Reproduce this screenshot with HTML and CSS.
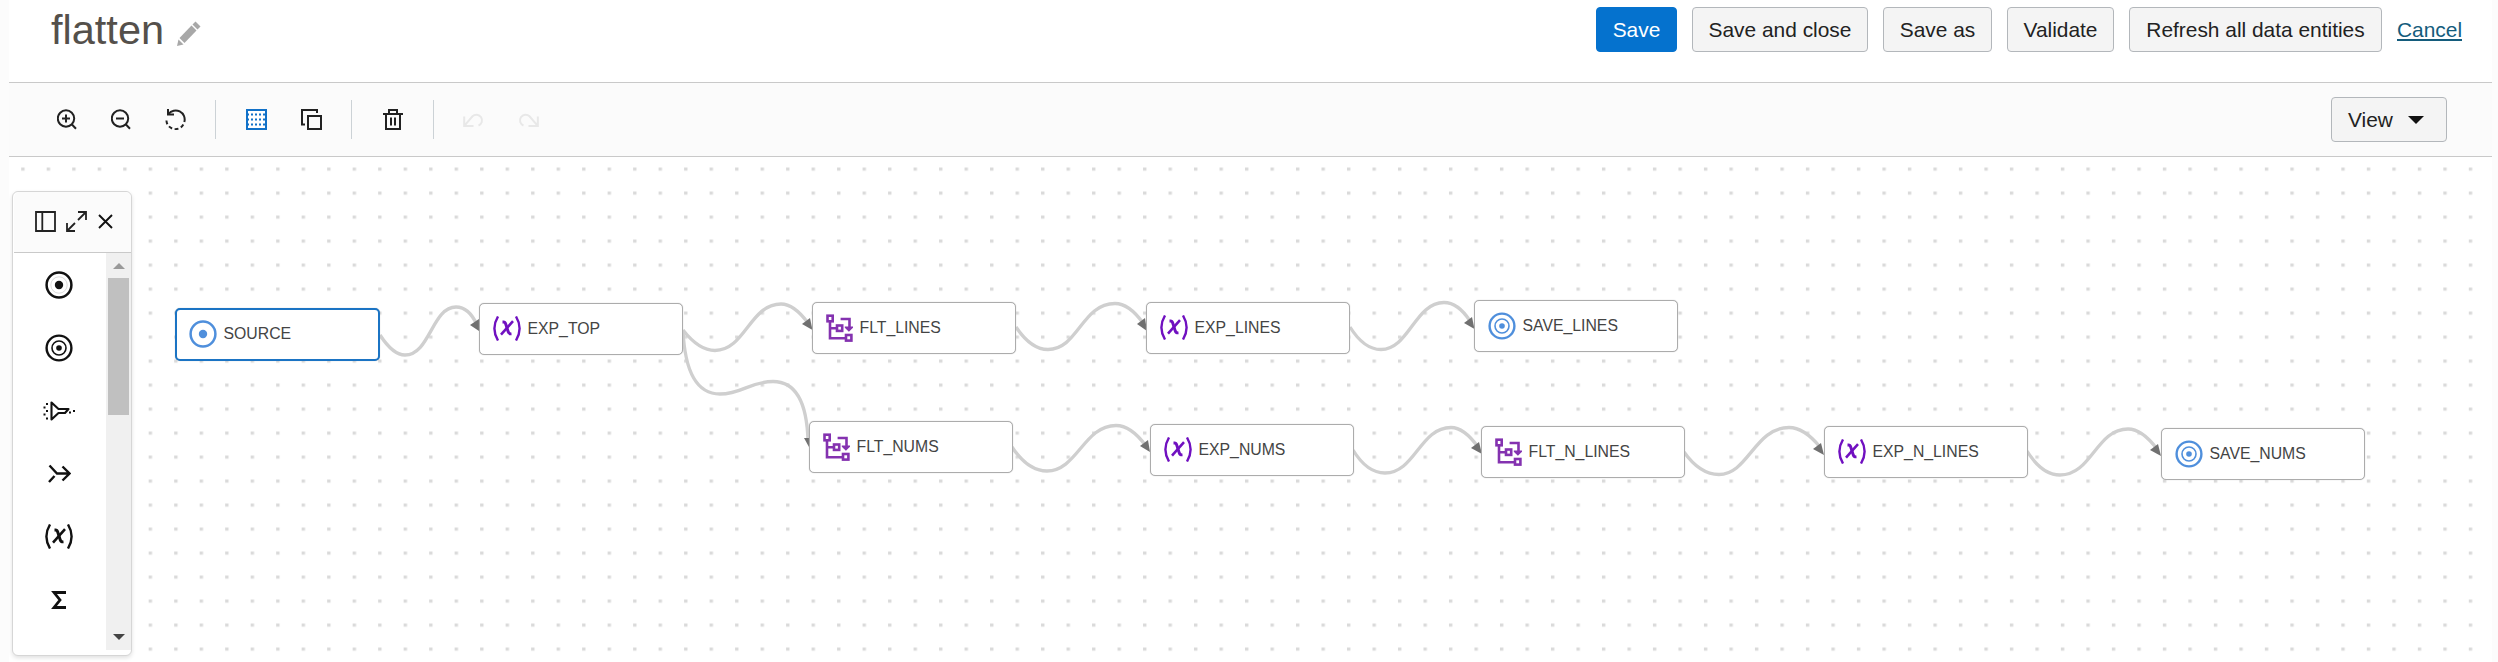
FILE: index.html
```html
<!DOCTYPE html>
<html lang="en">
<head>
<meta charset="utf-8">
<title>flatten</title>
<link rel="stylesheet" href="styles.css">
</head>
<body>
<svg class="defs" aria-hidden="true">
  <symbol id="source" viewBox="0 0 28 28"><circle cx="14" cy="14" r="12.4" fill="none" stroke="currentColor" stroke-width="2.5"/><circle cx="14" cy="14" r="4.2" fill="currentColor"/></symbol>
  <symbol id="target" viewBox="0 0 28 28"><circle cx="14" cy="14" r="12.4" fill="none" stroke="currentColor" stroke-width="2.4"/><circle cx="14" cy="14" r="7" fill="none" stroke="currentColor" stroke-width="1.6"/><circle cx="14" cy="14" r="2.8" fill="currentColor"/></symbol>
  <symbol id="expr" viewBox="0 0 28 25"><path d="M5 .5Q-2.200 12.500 5 24.500M23 .5Q30.200 12.500 23 24.500" fill="none" stroke="currentColor" stroke-width="2.400"/><path d="M9.500 6h1q1.600 0 2.300 2.200l2.400 7.500q.8 2.400 3.300 2.200" fill="none" stroke="currentColor" stroke-width="2.900"/><path d="M20 5.200L8 18.600" fill="none" stroke="currentColor" stroke-width="2.600"/></symbol>
  <symbol id="flat" viewBox="0 0 27 28"><g fill="none" stroke="currentColor" stroke-width="2.600"><rect x="1.500" y="1.700" width="5.200" height="5.600"/><rect x="11" y="11.500" width="5.200" height="5.400"/><rect x="20" y="21" width="5.400" height="5.600"/><path d="M4 7.500V24.200H20M4 14.300H11M14.600 5H23.500V13"/></g><path d="M18.800 12.400h8.200v1.400l-4.100 4-4.100-4z" fill="currentColor"/></symbol>
</svg>
<main class="page">
  <header class="header">
    <h1 class="title">flatten</h1>
    <svg class="pencil" width="24" height="25" viewBox="0 0 24 25"><g fill="#a8a8a8"><path d="M0 25l1.500-6.500 5 5z"/><path d="M2.500 17L14.500 4.500l5 5L7.500 22z"/><path d="M15.500 3.500L18.500.4l5 5-3 3.100z"/></g></svg>
    <nav class="actions">
      <button class="btn primary w81">Save</button>
      <button class="btn w176">Save and close</button>
      <button class="btn w109">Save as</button>
      <button class="btn w107">Validate</button>
      <button class="btn w253">Refresh all data entities</button>
      <a class="cancel">Cancel</a>
    </nav>
  </header>
  <section class="toolbar">
    <div class="group zoomers">
      <svg width="20" height="21" viewBox="0 0 20 21"><g fill="none" stroke="#222" stroke-width="2"><circle cx="9" cy="9.500" r="8.200"/><path d="M14.700 15.300l4.300 4.500M5 9.500h8M9 5.500v8"/></g></svg>
      <svg width="20" height="21" viewBox="0 0 20 21"><g fill="none" stroke="#222" stroke-width="2"><circle cx="9" cy="9.500" r="8.200"/><path d="M14.700 15.300l4.300 4.500M5 9.500h8"/></g></svg>
      <svg width="22" height="21" viewBox="0 0 22 21"><g fill="none" stroke="#222" stroke-width="2"><path d="M3.500 5A9 9 0 0 1 19.300 13"/><path d="M18.300 15.500A9 9 0 0 1 1.500 10" stroke-dasharray="3.800 2.600"/><path d="M3 0v5.500h6"/></g></svg>
    </div>
    <div class="group pair">
      <svg width="21" height="21" viewBox="0 0 21 21"><rect x="1" y="1" width="19" height="19" fill="#fff" stroke="#1171c8" stroke-width="2"/><path d="M2 5.500h17M2 10.500h17M2 15.500h17" stroke="#1171c8" stroke-width="2" stroke-dasharray="2 2" stroke-dashoffset="1"/></svg>
      <svg width="21" height="21" viewBox="0 0 21 21"><g fill="none" stroke="#222" stroke-width="2"><path d="M16 4V1H1v14.500h3"/><rect x="7" y="7" width="13" height="13"/></g></svg>
    </div>
    <div class="group bin">
      <svg width="20" height="21" viewBox="0 0 20 21"><g fill="none" stroke="#222" stroke-width="2"><path d="M0 5h20M6 4.500V1h8v3.500M3 5v15h14V5M8 8.500v8M12 8.500v8"/></g></svg>
    </div>
    <div class="group history">
      <svg width="21" height="14" viewBox="0 0 21 14"><path d="M1.200 3.500v9.500h9.300M1.500 12.700L9.500 3.300A5.600 5.600 0 1 1 15.500 12.500" fill="none" stroke="#e8e8e8" stroke-width="2"/></svg>
      <svg width="21" height="14" viewBox="0 0 21 14"><path d="M19.800 3.500v9.500h-9.300M19.500 12.700L11.500 3.300A5.600 5.600 0 1 0 5.500 12.500" fill="none" stroke="#e8e8e8" stroke-width="2"/></svg>
    </div>
    <button class="btn view">View<span class="caret"></span></button>
  </section>
  <section class="canvas">
    <svg class="edges" width="2483" height="505" viewBox="9 157 2483 505">
      <defs>
        <pattern id="dots" x="21.200" y="167.500" width="25.496" height="24" patternUnits="userSpaceOnUse"><rect width="3.400" height="3.200" fill="#dadada"/></pattern>
      </defs>
      <rect x="9" y="157" width="2470" height="505" fill="url(#dots)"/>
      <g class="wires">
        <path d="M380 335Q393 355 405 355C430 355 432 307 456 307Q469 307 477 325"/>
        <path d="M683 330Q699 350.500 715 350.500C745 350.500 750 304 781 304Q794 304 808 323"/>
        <path d="M683 330C685 375 698 394 720 394C742 394 750 381.500 773 381.500C797 381.500 807 405 808 441"/>
        <path d="M1016 327Q1031 349.500 1048 349.500C1078 349.500 1082 303.500 1115 303.500Q1129 303.500 1143 323"/>
        <path d="M1350 327Q1364 349.500 1381 349.500C1409 349.500 1415 302.500 1444 302.500Q1458 302.500 1470 321"/>
        <path d="M1012 447Q1028 471 1047 471C1077 471 1084 425.500 1116 425.500Q1131 425.500 1146 446"/>
        <path d="M1353 450Q1367 473 1385 473C1415 473 1420 427.500 1451 427.500Q1464 427.500 1478 447"/>
        <path d="M1684 452Q1700 474.500 1719 474.500C1748 474.500 1755 427.500 1789 427.500Q1804 427.500 1820 447"/>
        <path d="M2027 451Q2042 475 2060 475C2092 475 2096 429 2128 429Q2142 429 2157 449"/>
      </g>
      <g fill="#707070">
        <path d="M470 325l9-6v12z"/>
        <path d="M802 324l8-6 2.500 12z"/>
        <path d="M804 438h5v9z"/>
        <path d="M1137 324l8-6 2 13z"/>
        <path d="M1464 323l8-6 2.500 12z"/>
        <path d="M1140 446l8-6 2 12z"/>
        <path d="M1471 448l8-6 3 12z"/>
        <path d="M1813 449l8-6 3 12z"/>
        <path d="M2150 450l8-6 3 12z"/>
      </g>
    </svg>
    <div class="node selected n1"><svg class="blue" width="28" height="28"><use href="#source"/></svg>SOURCE</div>
    <div class="node n2"><svg class="violet" width="28" height="25"><use href="#expr"/></svg>EXP_TOP</div>
    <div class="node n3"><svg class="purple" width="27" height="28"><use href="#flat"/></svg>FLT_LINES</div>
    <div class="node n4"><svg class="violet" width="28" height="25"><use href="#expr"/></svg>EXP_LINES</div>
    <div class="node n5"><svg class="blue" width="28" height="28"><use href="#target"/></svg>SAVE_LINES</div>
    <div class="node n6"><svg class="purple" width="27" height="28"><use href="#flat"/></svg>FLT_NUMS</div>
    <div class="node n7"><svg class="violet" width="28" height="25"><use href="#expr"/></svg>EXP_NUMS</div>
    <div class="node n8"><svg class="purple" width="27" height="28"><use href="#flat"/></svg>FLT_N_LINES</div>
    <div class="node n9"><svg class="violet" width="28" height="25"><use href="#expr"/></svg>EXP_N_LINES</div>
    <div class="node n10"><svg class="blue" width="28" height="28"><use href="#target"/></svg>SAVE_NUMS</div>
    <aside class="palette">
      <div class="palette-head">
        <svg width="21" height="21" viewBox="0 0 21 21"><path d="M1 1h19v19H1zM7.300 1v19" fill="none" stroke="#222" stroke-width="1.800"/></svg>
        <svg width="21" height="21" viewBox="0 0 21 21"><path d="M12 1h8v8M1 12v8h8M20 1l-8 8M9 12l-8 8" fill="none" stroke="#222" stroke-width="1.800"/></svg>
        <svg class="close" width="15" height="15" viewBox="0 0 15 15"><path d="M1 1l13 13M14 1L1 14" fill="none" stroke="#111" stroke-width="1.900"/></svg>
      </div>
      <div class="palette-body">
        <div class="items">
          <svg width="28" height="28" viewBox="0 0 28 28"><use href="#source"/><circle cx="14" cy="14" r="8.200" fill="none" stroke="#ccc" stroke-width=".7"/></svg>
          <svg width="28" height="28"><use href="#target"/></svg>
          <svg width="32" height="20" viewBox="0 0 32 20"><path d="M8.500 1.500v17L15.500 12H22l3.500-4H15.500z" fill="none" stroke="currentColor" stroke-width="2.100" stroke-linejoin="round"/><g fill="currentColor"><path d="M3 2h2v2H3zM3 9h2v2H3zM3 16.500h2v2H3zM.5 5.500h2v2h-2zM.5 12.500h2v2h-2zM26 10.500h2v2h-2zM30 9h2v2h-2z"/></g></svg>
          <svg width="23" height="19" viewBox="0 0 23 19"><path d="M1.500 1.500L9 9.500H21M1 18l5.500-6M14.500 2.500l7 7-7 7" fill="none" stroke="currentColor" stroke-width="2.400"/></svg>
          <svg width="28" height="25"><use href="#expr"/></svg>
          <svg width="16" height="18" viewBox="0 0 16 18"><path d="M15 1.500H3L9 9l-6 7.500h12" fill="none" stroke="currentColor" stroke-width="2.800"/></svg>
        </div>
        <div class="scroll"><i class="up"></i><i class="thumb"></i><i class="down"></i></div>
      </div>
    </aside>
  </section>
</main>
</body>
</html>
```
FILE: styles.css
```css
* { box-sizing: border-box; }
body { margin: 0; background: #fcfcfc; font-family: "Liberation Sans", Arial, sans-serif; color: #222; }
.defs { position: absolute; width: 0; height: 0; }
.page { width: 2483px; height: 662px; margin-left: 9px; background: #fff; overflow: hidden; }
.header { height: 83px; border-bottom: 1px solid #c9c9c9; display: flex; align-items: flex-start; padding-left: 42px; }
.title { margin: 6px 0 0; font-size: 41.500px; line-height: 48px; font-weight: 400; color: #54504b; width: 115px; white-space: nowrap; }
.pencil { margin: 21px 0 0 11px; }
.actions { margin-left: auto; padding: 7px 30px 0 0; display: flex; align-items: center; gap: 15px; }
.btn { height: 45px; padding: 0; border: 1px solid #b3b7bb; border-radius: 4px; background: #f4f4f4; color: #222; font: 20.900px/43px "Liberation Sans", Arial, sans-serif; white-space: nowrap; }
.primary { background: #0572ce; border-color: #0572ce; color: #fff; }
.w81 { width: 81px; }
.w176 { width: 176px; }
.w109 { width: 109px; }
.w107 { width: 107px; }
.w253 { width: 253px; }
.cancel { font-size: 20.900px; line-height: 23px; color: #145c7c; border-bottom: 2px solid #145c7c; height: 23px; width: 65px; }
.toolbar { height: 74px; background: #fbfbfb; border-bottom: 1px solid #c9c9c9; display: flex; align-items: center; padding-right: 45px; }
.toolbar svg { display: block; }
.group { height: 39px; display: flex; align-items: center; border-right: 1px solid #ccd2d6; }
.zoomers { width: 207px; padding-left: 48px; gap: 34px; }
.pair { width: 136px; padding-left: 30px; gap: 34px; }
.bin { width: 82px; padding-left: 31px; }
.history { border: 0; padding-left: 29px; gap: 34px; }
.view { margin-left: auto; width: 116px; display: flex; align-items: center; justify-content: flex-start; padding-left: 16px; gap: 15px; }
.caret { border: 8px solid transparent; border-top: 8px solid #111; border-bottom: 0; }
.canvas { position: relative; height: 505px; }
.edges { display: block; }
.wires { fill: none; stroke: #cfcfcf; stroke-width: 3.300; }
.node { position: absolute; width: 204px; height: 52px; border: 1px solid #acacac; box-shadow: 0 0 1px #b5b5b5; border-radius: 5px; background: #fff; padding: 0 0 1px 13px; display: flex; align-items: center; gap: 6.500px; font-size: 15.800px; color: #444; white-space: nowrap; }
.node.selected { border: 2px solid #1b74c4; height: 53px; width: 205px; padding-left: 12px; }
.blue { color: #4f8fdc; }
.violet { color: #7010c0; }
.purple { color: #8432b0; }
.n1 { left: 166px; top: 151px; }
.n2 { left: 470px; top: 146px; }
.n3 { left: 803px; top: 145px; }
.n4 { left: 1137px; top: 145px; }
.n5 { left: 1465px; top: 143px; }
.n6 { left: 800px; top: 264px; }
.n7 { left: 1141px; top: 267px; }
.n8 { left: 1472px; top: 269px; }
.n9 { left: 1815px; top: 269px; }
.n10 { left: 2152px; top: 271px; }
.palette { position: absolute; left: 3px; top: 34px; width: 120px; height: 465px; border: 1px solid #d6d6d6; border-radius: 6px; background: #fff; box-shadow: 0 2px 4px rgba(0,0,0,.12); display: flex; flex-direction: column; padding: 0 0 5px 1px; }
.palette-head { height: 61px; background: #fbfbfb; border-bottom: 1px solid #c9c9c9; display: flex; align-items: center; gap: 10px; padding: 0 0 1px 21px; border-radius: 6px 6px 0 0; }
.close { margin-left: 1px; }
.palette-body { flex: 1; display: flex; }
.items { width: 92px; padding-right: 1.500px; display: grid; grid-auto-rows: 63.100px; place-items: center; align-content: start; color: #111; }
.scroll { flex: 1; background: #f0f0f0; display: flex; flex-direction: column; align-items: center; padding: 10px 0; }
.up { border: 6px solid transparent; border-bottom-color: #999; border-top: 0; }
.thumb { width: 21px; height: 137px; background: #c0c0c0; margin-top: 9px; }
.down { margin-top: auto; border: 6px solid transparent; border-top-color: #444; border-bottom: 0; }
```
